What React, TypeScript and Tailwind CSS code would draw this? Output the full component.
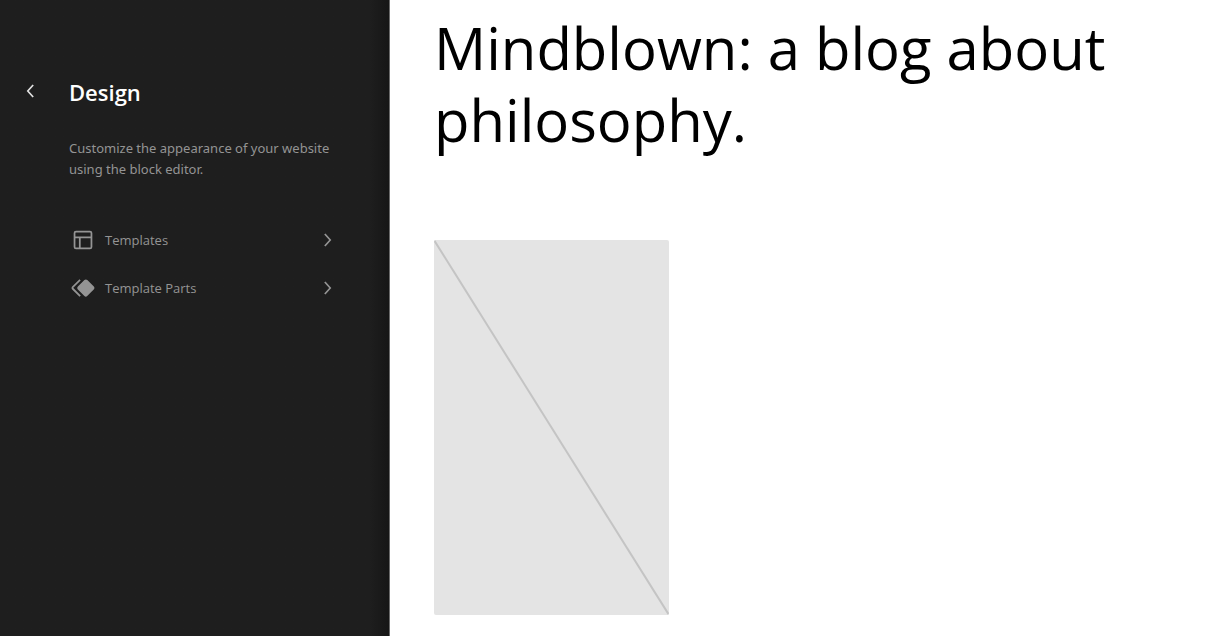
import type { ReactNode } from 'react';

interface IconProps {
  path: string;
  className?: string;
}

interface NavItem {
  label: string;
  href: string;
  icon: string;
}

const CHEVRON_LEFT = 'M14.6 7l-1.2-1L8 12l5.4 6 1.2-1-4.6-5z';
const CHEVRON_RIGHT = 'M10.6 6L9.4 7l4.6 5-4.6 5 1.2 1 5.4-6z';
const LAYOUT =
  'M18 5.5H6a.5.5 0 00-.5.5v3h13V6a.5.5 0 00-.5-.5zm.5 5H10v8h8a.5.5 0 00.5-.5v-7.5zm-10 0h-3V18a.5.5 0 00.5.5h2.5v-8zM6 4h12a2 2 0 012 2v12a2 2 0 01-2 2H6a2 2 0 01-2-2V6a2 2 0 012-2z';
const SYMBOL_FILLED =
  'M21.3 10.8l-5.6-5.6c-.7-.7-1.8-.7-2.5 0l-5.6 5.6c-.7.7-.7 1.8 0 2.5l5.6 5.6c.3.3.8.5 1.2.5s.9-.2 1.2-.5l5.6-5.6c.8-.7.8-1.9.1-2.5zm-17.6 1L10 5.5l-1-1-6.3 6.3c-.7.7-.7 1.8 0 2.5L9 19.5l1.1-1.1-6.3-6.3c-.2 0-.2-.2-.1-.3z';

const navItems: NavItem[] = [
  { label: 'Templates', href: '#templates', icon: LAYOUT },
  { label: 'Template Parts', href: '#template-parts', icon: SYMBOL_FILLED },
];

function Icon({ path, className = 'size-7' }: IconProps) {
  return (
    <svg viewBox="0 0 24 24" fill="currentColor" aria-hidden="true" className={`shrink-0 ${className}`}>
      <path d={path} />
    </svg>
  );
}

function Sidebar({ children }: { children: ReactNode }) {
  return (
    <aside className="w-[390px] shrink-0 border-r border-[#6a6a6a] bg-[#1e1e1e] bg-linear-to-r from-[#1e1e1e] from-95% to-[#161616] pr-[49px] pl-[18px] pt-19">
      {children}
    </aside>
  );
}

export default function App() {
  return (
    <div className="flex min-h-screen bg-white font-['Open_Sans','Noto_Sans',sans-serif]">
      <Sidebar>
        {/* Title row */}
        <div className="flex items-center gap-[25px]">
          <button type="button" aria-label="Back" className="pb-0.5 text-[#e0e0e0]">
            <Icon path={CHEVRON_LEFT} className="size-[26px]" />
          </button>
          <h1 className="text-[22px] leading-8 font-semibold text-white">Design</h1>
        </div>

        <div className="pl-[51px]">
          <p className="mt-[30px] font-['Noto_Sans','Open_Sans',sans-serif] text-[13px] leading-[21px] text-[#949494]">
            Customize the appearance of your website using the block editor.
          </p>

          <nav className="mt-9">
            <ul>
              {navItems.map((item) => (
                <li key={item.label}>
                  <a href={item.href} className="flex h-12 items-center gap-2 text-[13px] text-[#949494]">
                    <Icon path={item.icon} />
                    <span className="flex-1 pt-0.5">{item.label}</span>
                    <Icon path={CHEVRON_RIGHT} className="size-[26px]" />
                  </a>
                </li>
              ))}
            </ul>
          </nav>
        </div>
      </Sidebar>

      {/* Site preview */}
      <main className="min-w-0 flex-1 px-11 pt-3">
        <h2 className="text-[58px] leading-[72px] text-black">Mindblown: a blog about philosophy.</h2>

        {/* Placeholder for a post without a featured image */}
        <div className="mt-[84px] h-[375px] w-[235px] overflow-hidden rounded-xs bg-[#e4e4e4]">
          <svg viewBox="0 0 235 375" className="size-full" preserveAspectRatio="none" aria-hidden="true">
            <line x1="0" y1="0" x2="235" y2="375" stroke="#c4c4c4" strokeWidth="2" />
          </svg>
        </div>
      </main>
    </div>
  );
}
